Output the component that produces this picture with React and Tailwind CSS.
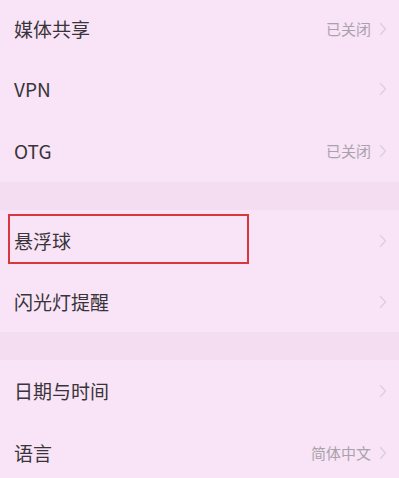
import React from 'react';

const font = { fontFamily: '"Noto Sans CJK SC", "Liberation Sans", sans-serif' };

function Chevron() {
  return (
    <svg width="8" height="14" viewBox="0 0 8 14" fill="none" className="ml-[8px]">
      <polyline points="1.5 1.5 6.5 7 1.5 12.5" stroke="#dccfdb" strokeWidth="1.3" strokeLinecap="round" strokeLinejoin="round" />
    </svg>
  );
}

function Row({ label, value, h = 'h-[62px]', boxed }) {
  return (
    <div className={`${h} flex items-center justify-between pl-[14px] pr-[12px] relative`}>
      {boxed && (
        <div className="absolute left-[8px] top-[4px] w-[241px] h-[50px] border-2 border-[#d9363e]"></div>
      )}
      <span className="text-[19px] text-[#38343a]">{label}</span>
      <div className="flex items-center">
        {value && <span className="text-[15px] text-[#aaa2ab]">{value}</span>}
        <Chevron />
      </div>
    </div>
  );
}

export default function App() {
  return (
    <div className="w-[399px] h-[478px] overflow-hidden bg-[#f8e4f6]" style={font}>
      <Row label="媒体共享" value="已关闭" h="h-[58px]" />
      <Row label="VPN" />
      <Row label="OTG" value="已关闭" />
      <div className="h-[28px] bg-[#f4ddf0]"></div>
      <Row label="悬浮球" boxed />
      <Row label="闪光灯提醒" h="h-[60px]" />
      <div className="h-[28px] bg-[#f4ddf0]"></div>
      <Row label="日期与时间" />
      <Row label="语言" value="简体中文" />
    </div>
  );
}
